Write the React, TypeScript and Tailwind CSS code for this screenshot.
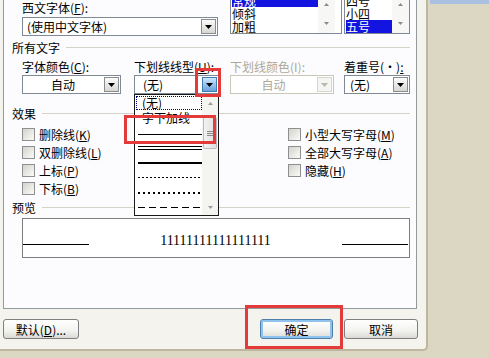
import type { ReactNode } from 'react'

type BtnState = 'normal' | 'hot' | 'disabled'

function Tri({ up, color = '#000', w = 7, h = 4 }: { up?: boolean; color?: string; w?: number; h?: number }) {
  return (
    <svg width={w} height={h} viewBox={`0 0 ${w} ${h}`}>
      <path d={up ? `M0 ${h}h${w}L${w / 2} 0z` : `M0 0h${w}L${w / 2} ${h}z`} fill={color} />
    </svg>
  )
}

function DropBtn({ state = 'normal' }: { state?: BtnState }) {
  const look =
    state === 'hot'
      ? 'border-[#3d7bb5] bg-[linear-gradient(#cfe5fa,#6aa2dc)]'
      : state === 'disabled'
        ? 'border-[#d6d6d0] bg-[#f5f5f2]'
        : 'border-[#8c8c8c] bg-[linear-gradient(#fbfbfb,#d6d6d2)]'
  return (
    <div className={`w-[15px] h-[15px] m-[1px] shrink-0 border flex items-center justify-center ${look}`}>
      <Tri color={state === 'disabled' ? '#b9b9b0' : '#000'} />
    </div>
  )
}

function Combo({ className, children, center, state }: { className: string; children: ReactNode; center?: boolean; state?: BtnState }) {
  const off = state === 'disabled'
  return (
    <div className={`h-[19px] border bg-white flex items-center ${off ? 'border-[#c9c7ba]' : 'border-[#7f8a96]'} ${className}`}>
      <span className={`flex-1 leading-[13px] ${center ? 'text-center' : ''} ${off ? 'text-[#aca899]' : ''}`}>{children}</span>
      <DropBtn state={state} />
    </div>
  )
}

function Section({ title }: { title: string }) {
  return (
    <div className="flex items-center h-[13px] leading-[13px]">
      <span>{title}</span>
      <div className="flex-1 h-px bg-[#d3d3c6] ml-[6px]" />
    </div>
  )
}

function Check({ label, k }: { label: string; k: string }) {
  return (
    <div className="h-[18px] flex items-center gap-[4px]">
      <span className="w-[13px] h-[13px] border border-[#8e8f8f] bg-[linear-gradient(135deg,#d4d4cd,#fafaf8)]" />
      <span className="leading-[13px]">
        {label}(<u>{k}</u>)
      </span>
    </div>
  )
}

function ListBox({ className, items, selected, itemW }: { className: string; items: string[]; selected: number; itemW: string }) {
  return (
    <div className={`h-[34px] border-x border-b border-[#7f8a96] bg-white flex overflow-hidden ${className}`}>
      <div className={`pl-[1px] ${itemW}`}>
        <div className="-mt-[6px]">
          {items.map((t, i) => (
            <div key={t} className={`h-[13px] leading-[13px] ${i === selected ? 'bg-[#1414e0] text-white' : ''}`}>
              {t}
            </div>
          ))}
        </div>
      </div>
      <div className="w-[17px] bg-[#f7f7f5] flex flex-col items-center justify-between pt-[3px] pb-[8px]">
        <Tri up color="#8a8a8a" w={5} h={3} />
        <Tri color="#8a8a8a" w={5} h={3} />
      </div>
    </div>
  )
}

const dash = (cls: string) => <div className={`ml-[3px] w-[64px] ${cls}`} />

function UnderlineList() {
  return (
    <div className="absolute left-[134px] top-[94px] w-[85px] h-[122px] border border-[#1a1a1a] bg-white flex">
      <div className="flex-1">
        <div className="h-[15px] flex items-center">
          <div className="ml-[1px] w-[66px] h-[14px] border border-dotted border-[#000080] leading-[12px] pl-[5px]">(无)</div>
        </div>
        <div className="h-[15px] leading-[15px] pl-[7px]">字下加线</div>
        <div className="h-[15px] flex items-center pt-[3px]">{dash('h-px bg-black')}</div>
        <div className="h-[15px] flex flex-col justify-center gap-[2px]">
          {dash('h-px bg-black')}
          {dash('h-px bg-black')}
        </div>
        <div className="h-[15px] flex items-center">{dash('h-[2px] bg-black')}</div>
        <div className="h-[15px] flex items-center">{dash('h-px bg-[repeating-linear-gradient(90deg,#000_0_2px,transparent_2px_4px)]')}</div>
        <div className="h-[15px] flex items-center">{dash('h-[2px] bg-[repeating-linear-gradient(90deg,#000_0_2px,transparent_2px_5px)]')}</div>
        <div className="h-[15px] flex items-center">{dash('h-px bg-[repeating-linear-gradient(90deg,#000_0_7px,transparent_7px_11px)]')}</div>
      </div>
      <div className="w-[16px] bg-[#f4f4f0] flex flex-col items-center">
        <div className="h-[16px] flex items-center justify-center">
          <Tri up color="#9a9a9a" w={5} h={3} />
        </div>
        <div className="mt-[6px] w-[14px] h-[32px] rounded-[2px] border border-[#b8bcc4] bg-[linear-gradient(90deg,#f2f2f2,#dedede)] flex flex-col items-center justify-center gap-[1px]">
          <div className="w-[6px] h-px bg-[#8a8a8a]" />
          <div className="w-[6px] h-px bg-[#8a8a8a]" />
          <div className="w-[6px] h-px bg-[#8a8a8a]" />
        </div>
        <div className="mt-auto h-[16px] flex items-center justify-center">
          <Tri color="#9a9a9a" w={5} h={3} />
        </div>
      </div>
    </div>
  )
}

function Button({ className, children, focused }: { className: string; children: ReactNode; focused?: boolean }) {
  return (
    <button
      type="button"
      className={`h-[20px] rounded-[3px] border leading-[13px] bg-[linear-gradient(#ffffff,#f2f2ef_60%,#d9d9d5)] ${
        focused ? 'border-[#4f7ea8] shadow-[inset_0_0_0_2px_#8ec3ee]' : 'border-[#7f7f7f]'
      } ${className}`}
    >
      {children}
    </button>
  )
}

function FontPanel() {
  return (
    <div className="ml-[3px] w-[414px] h-[309px] shrink-0 border-x border-b border-[#919b9c] bg-[#fcfcfe] pl-[8px] pr-[6px]">
      <div className="flex h-[34px]">
        <div className="ml-[10px] w-[196px] flex flex-col">
          <div className="mt-[1px] leading-[14px]">
            西文字体(<u>F</u>):
          </div>
          <Combo className="mt-[2px] h-[17px] w-[196px]">
            <span className="pl-[4px]">(使用中文字体)</span>
          </Combo>
        </div>
        <ListBox className="ml-[12px] w-[112px]" itemW="w-[87px]" items={['常规', '倾斜', '加粗']} selected={0} />
        <ListBox className="ml-[2px] w-[66px]" itemW="w-[47px]" items={['四号', '小四', '五号']} selected={2} />
      </div>

      <div className="mt-[7px]">
        <Section title="所有文字" />
      </div>

      <div className="flex mt-[6px] leading-[13px]">
        <div className="ml-[10px] w-[99px]">
          字体颜色(<u>C</u>):
        </div>
        <div className="ml-[13px] w-[85px]">
          下划线线型(<u>U</u>):
        </div>
        <div className="ml-[11px] w-[104px] text-[#aca899]">下划线颜色(I):</div>
        <div className="ml-[10px] w-[66px]">
          着重号(·)<u>:</u>
        </div>
      </div>

      <div className="flex mt-[2px]">
        <Combo className="ml-[10px] w-[99px]" center>
          自动
        </Combo>
        <Combo className="ml-[13px] w-[85px]" state="hot">
          <span className="pl-[8px]">(无)</span>
        </Combo>
        <Combo className="ml-[11px] w-[104px]" center state="disabled">
          自动
        </Combo>
        <Combo className="ml-[10px] w-[66px]">
          <span className="pl-[5px]">(无)</span>
        </Combo>
      </div>

      <div className="mt-[13px]">
        <Section title="效果" />
      </div>

      <div className="flex mt-[5px] ml-[10px]">
        <div className="w-[266px]">
          <Check label="删除线" k="K" />
          <Check label="双删除线" k="L" />
          <Check label="上标" k="P" />
          <Check label="下标" k="B" />
        </div>
        <div>
          <Check label="小型大写字母" k="M" />
          <Check label="全部大写字母" k="A" />
          <Check label="隐藏" k="H" />
        </div>
      </div>

      <div className="mt-[4px]">
        <Section title="预览" />
      </div>

      <div className="ml-[10px] mt-[4px] h-[40px] border border-[#7f7f7f] bg-white flex items-end justify-between pr-[1px] pb-[9px]">
        <div className="w-[66px] h-px bg-black mb-[3px]" />
        <span className="font-['Liberation_Serif',serif] text-[14px] leading-[14px]">11111111111111111</span>
        <div className="w-[66px] h-px bg-black mb-[3px]" />
      </div>
    </div>
  )
}

export default function App() {
  return (
    <div className="relative w-[489px] h-[358px] overflow-hidden flex bg-[#dcd7c2] text-[12px] text-black font-['Noto_Sans_CJK_SC','Liberation_Sans',sans-serif]">
      <div className="w-[428px] h-[351px] shrink-0 flex flex-col bg-[#f4f3ee] border-r-2 border-b-2 border-[#bdb7a0] rounded-br-[5px]">
        <FontPanel />
        <div className="flex items-center mt-[10px]">
          <Button className="ml-[3px] w-[76px]">
            默认(<u>D</u>)...
          </Button>
          <Button className="ml-auto w-[73px]" focused>
            确定
          </Button>
          <Button className="ml-[11px] mr-[8px] w-[74px]">取消</Button>
        </div>
      </div>
      <div className="flex-1">
        <div className="ml-[2px] h-[4px] bg-[#a9c0de]" />
      </div>

      <UnderlineList />

      <div className="absolute left-[195px] top-[68px] w-[26px] h-[29px] border-[3px] border-[#e53a3a]" />
      <div className="absolute left-[124px] top-[115px] w-[92px] h-[29px] border-[3px] border-[#e53a3a]" />
      <div className="absolute left-[245px] top-[305px] w-[98px] h-[44px] border-[3px] border-[#e53a3a]" />
    </div>
  )
}
